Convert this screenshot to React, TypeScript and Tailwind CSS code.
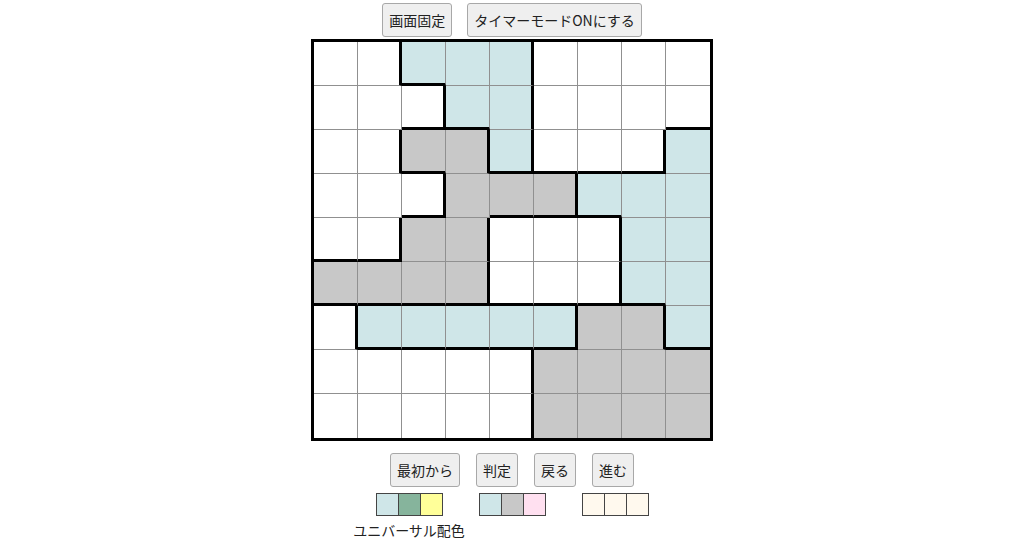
import clsx from "clsx";

const board = [
	"WWBBBWWWW",
	"WWWBBWWWW",
	"WWGGBWWWB",
	"WWWGGGBBB",
	"WWGGWWWBB",
	"GGGGWWWBB",
	"WBBBBBGGB",
	"WWWWWGGGG",
	"WWWWWGGGG",
];

const fill: Record<string, string> = {
	W: "bg-white",
	B: "bg-[#cfe6e8]",
	G: "bg-[#c8c8c8]",
};

const palettes = [
	["bg-[#cfe6e8]", "bg-[#86b49c]", "bg-[#ffff99]"],
	["bg-[#cfe6e8]", "bg-[#c8c8c8]", "bg-[#ffe0f0]"],
	["bg-[#fff9ee]", "bg-[#fff9ee]", "bg-[#fff9ee]"],
];

function PlainButton({ label }: { label: string }) {
	return (
		<button
			type="button"
			className="flex h-[34px] items-center justify-center rounded-[3px] border border-[#a8a8a8] bg-[#efefef] px-[6px] text-[14px] leading-5 text-[#222]"
		>
			{label}
		</button>
	);
}

function Board() {
	return (
		<div className="mt-[2px] grid grid-cols-[repeat(9,44px)] border-[3px] border-black">
			{board.map((row, r) =>
				row.split("").map((cell, c) => {
					const rightThick = c < 8 && row[c + 1] !== cell;
					const bottomThick = r < 8 && board[r + 1][c] !== cell;
					return (
						<div
							key={`${r}-${c}`}
							className={clsx(
								"h-[44px] w-[44px]",
								fill[cell],
								c < 8 && (rightThick ? "border-r-[3px] border-r-black" : "border-r border-r-[#909090]"),
								r < 8 && (bottomThick ? "border-b-[3px] border-b-black" : "border-b border-b-[#909090]"),
							)}
						/>
					);
				}),
			)}
		</div>
	);
}

function Swatches({ colors }: { colors: string[] }) {
	return (
		<div className="flex">
			{colors.map((color, i) => (
				<div key={i} className={clsx("h-[23px] w-[23px] border border-[#444]", color, i > 0 && "-ml-px")} />
			))}
		</div>
	);
}

export default function App() {
	return (
		<div
			className="flex min-h-[538px] w-full flex-col items-center bg-white pt-[3px] text-[#222]"
			style={{ fontFamily: '"Noto Sans CJK JP", "Noto Sans", sans-serif' }}
		>
			<div className="flex gap-[15px]">
				<PlainButton label="画面固定" />
				<PlainButton label="タイマーモードONにする" />
			</div>

			<Board />

			<div className="mt-3 flex gap-4">
				<PlainButton label="最初から" />
				<PlainButton label="判定" />
				<PlainButton label="戻る" />
				<PlainButton label="進む" />
			</div>

			<div className="mt-[6px] flex items-start gap-[36px]">
				<div className="flex w-[67px] flex-col">
					<Swatches colors={palettes[0]} />
					<div className="mt-[4px] flex w-full justify-center">
						<span className="shrink-0 whitespace-nowrap text-[14px] leading-5">ユニバーサル配色</span>
					</div>
				</div>
				<Swatches colors={palettes[1]} />
				<Swatches colors={palettes[2]} />
			</div>
		</div>
	);
}
